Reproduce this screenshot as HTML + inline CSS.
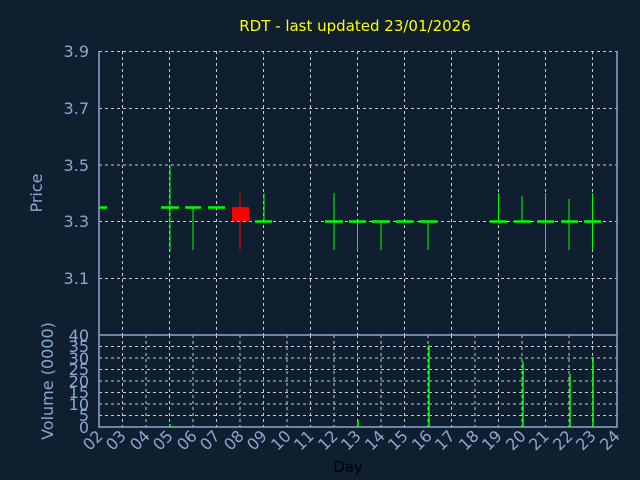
<!DOCTYPE html><html><head><style>body{margin:0;background:#0f1f30}svg{display:block}text{font-family:"DejaVu Sans","Liberation Sans",sans-serif}</style></head><body>
<svg width="640" height="480" viewBox="0 0 640 480">
<rect width="640" height="480" fill="#0f1f30"/>
<text x="355" y="31" fill="#ffff00" font-size="15" text-anchor="middle">RDT - last updated 23/01/2026</text>
<g stroke="#c8c8c8" stroke-dasharray="3,3" stroke-width="1">
<path d="M99 51.5H617M99 108.5H617M99 165H617M99 221.5H617M99 278.5H617"/>
<path d="M122.5 51V335M169.5 51V335M216.5 51V335M263.5 51V335M310.5 51V335M357.5 51V335M404.5 51V335M451.5 51V335M498.5 51V335M545.5 51V335M592.5 51V335"/>
<path d="M99 346.5H617M99 358H617M99 369.5H617M99 381H617M99 392.5H617M99 404H617M99 415.5H617"/>
<path d="M122.5 335V427M146 335V427M169.5 335V427M193 335V427M216.5 335V427M240 335V427M263.5 335V427M287 335V427M310.5 335V427M334 335V427M357.5 335V427M381 335V427M404.5 335V427M428 335V427M451.5 335V427M475 335V427M498.5 335V427M522 335V427M545.5 335V427M569 335V427M592.5 335V427"/>
</g>
<g stroke="#8aa8d0" fill="none" stroke-width="1.5">
<path d="M99 51V427H617V51"/><path d="M99 335H617"/>
</g>
<g fill="#8aa8d0" font-size="16" text-anchor="end">
<text x="89" y="57">3.9</text><text x="89" y="114">3.7</text><text x="89" y="171">3.5</text><text x="89" y="227">3.3</text><text x="89" y="284">3.1</text>
<text x="89" y="341">40</text><text x="89" y="352">35</text><text x="89" y="364">30</text><text x="89" y="375">25</text><text x="89" y="387">20</text><text x="89" y="398">15</text><text x="89" y="410">10</text><text x="89" y="421">5</text><text x="89" y="433">0</text>
<text transform="translate(42,193) rotate(-90)" text-anchor="middle">Price</text>
<text transform="translate(53,381) rotate(-90)" text-anchor="middle">Volume (0000)</text>
</g>
<text x="348" y="472" fill="#000" font-size="15" text-anchor="middle">Day</text>
<g fill="#8aa8d0" font-size="16" text-anchor="end">
<text transform="translate(104,437) rotate(-45)">02</text><text transform="translate(127,437) rotate(-45)">03</text><text transform="translate(151,437) rotate(-45)">04</text><text transform="translate(174,437) rotate(-45)">05</text><text transform="translate(198,437) rotate(-45)">06</text><text transform="translate(221,437) rotate(-45)">07</text><text transform="translate(245,437) rotate(-45)">08</text><text transform="translate(268,437) rotate(-45)">09</text><text transform="translate(292,437) rotate(-45)">10</text><text transform="translate(315,437) rotate(-45)">11</text><text transform="translate(339,437) rotate(-45)">12</text><text transform="translate(362,437) rotate(-45)">13</text><text transform="translate(386,437) rotate(-45)">14</text><text transform="translate(409,437) rotate(-45)">15</text><text transform="translate(433,437) rotate(-45)">16</text><text transform="translate(456,437) rotate(-45)">17</text><text transform="translate(480,437) rotate(-45)">18</text><text transform="translate(503,437) rotate(-45)">19</text><text transform="translate(527,437) rotate(-45)">20</text><text transform="translate(550,437) rotate(-45)">21</text><text transform="translate(574,437) rotate(-45)">22</text><text transform="translate(597,437) rotate(-45)">23</text><text transform="translate(621,437) rotate(-45)">24</text>
</g>
<g stroke="#00ff00" fill="none">
<g stroke-width="1"><path d="M170 165V252M193 207V250M264 193V221M334 193V250M357.5 221V252M381 221V250M428 221V250M498.5 193V221M522 196V221M545.5 193V250M569 199V250M592.5 193V250"/></g>
<g stroke-width="2.5"><path d="M99 207.5H107M161 207.5H179M185 207.5H201M208 207.5H225M255 221.5H272M325 221.5H343M349 221.5H366M372 221.5H390M396 221.5H413M419 221.5H437M490 221.5H507M514 221.5H531M537 221.5H554M561 221.5H578M584 221.5H601"/></g>
<g stroke-width="1.5"><path d="M429 345V427M523 362V427M570 374V427M593 357V427M358 420V427M170 424V427"/></g>
</g>
<path d="M240 193V250" stroke="#ff0000"/>
<rect x="232" y="207" width="17" height="14" fill="#ff0000"/>
</svg></body></html>
